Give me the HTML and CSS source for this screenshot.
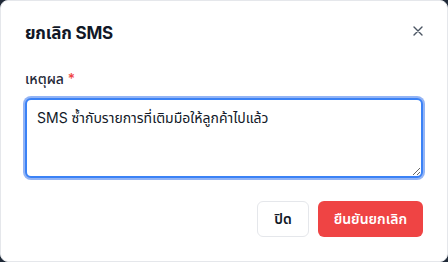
FILE: index.html
```html
<!doctype html>
<html lang="th">
  <head>
    <meta charset="UTF-8" />
    <meta name="viewport" content="width=device-width, initial-scale=1.0" />
    <title>ยกเลิก SMS</title>
    <link rel="stylesheet" href="styles.css">
  </head>
  <body>
    <div class="modal">
      <div class="modal-header">
        <h2>ยกเลิก SMS</h2>
        <button type="button" class="close-btn" aria-label="ปิด">
          <svg width="10" height="10" viewBox="0 0 10 10">
            <path d="M1 1 L9 9 M9 1 L1 9" stroke="#4b5563" stroke-width="1.4" stroke-linecap="round" />
          </svg>
        </button>
      </div>

      <label class="field-label" for="reason">เหตุผล <span class="required">*</span></label>
      <textarea id="reason" class="reason-input">SMS ซ้ำกับรายการที่เติมมือให้ลูกค้าไปแล้ว</textarea>

      <div class="modal-footer">
        <button type="button" class="btn btn-light">ปิด</button>
        <button type="button" class="btn btn-danger">ยืนยันยกเลิก</button>
      </div>
    </div>
  </body>
</html>
```

FILE: styles.css
```css
html, body {
  margin: 0;
  height: 100%;
}
body {
  background: #1f2937;
  font-family: "Inter", "Noto Sans Thai", "Noto Sans", sans-serif;
  color: #111827;
}
.modal {
  box-sizing: border-box;
  height: 262px;
  background: white;
  border: 1px solid #e5e7eb;
  border-radius: 8px;
  padding: 18px 24px 24px 24px;
  display: flex;
  flex-direction: column;
}
.modal-header {
  display: flex;
  justify-content: space-between;
  align-items: flex-start;
}
.modal-header h2 {
  margin: 0;
  font-size: 17px;
  font-weight: 700;
  line-height: 28px;
  letter-spacing: -0.2px;
}
.close-btn {
  background: none;
  border: none;
  padding: 0;
  margin: 2px -5px 0 0;
  width: 20px;
  height: 20px;
  display: flex;
  align-items: center;
  justify-content: center;
  cursor: pointer;
}
.field-label {
  margin-top: 22px;
  font-size: 14px;
  font-weight: 500;
  line-height: 20px;
  color: #1f2937;
}
.required {
  color: #ef4444;
}
.reason-input {
  margin-top: 9px;
  height: 80px;
  box-sizing: border-box;
  padding: 8px 10px;
  border: 2px solid #3b82f6;
  border-radius: 6px;
  box-shadow: 0 0 0 2px #93b4f5;
  font-family: inherit;
  font-size: 14px;
  line-height: 20px;
  color: #111827;
  resize: vertical;
  outline: none;
}
.modal-footer {
  margin-top: auto;
  display: flex;
  justify-content: flex-end;
  gap: 9px;
}
.btn {
  height: 36px;
  padding: 0 16px;
  border-radius: 6px;
  font-family: inherit;
  font-size: 14px;
  font-weight: 600;
  cursor: pointer;
}
.btn-light {
  background: white;
  color: #111827;
  border: 1px solid #e5e7eb;
}
.btn-danger {
  background: #ef4444;
  color: white;
  border: none;
}
```
